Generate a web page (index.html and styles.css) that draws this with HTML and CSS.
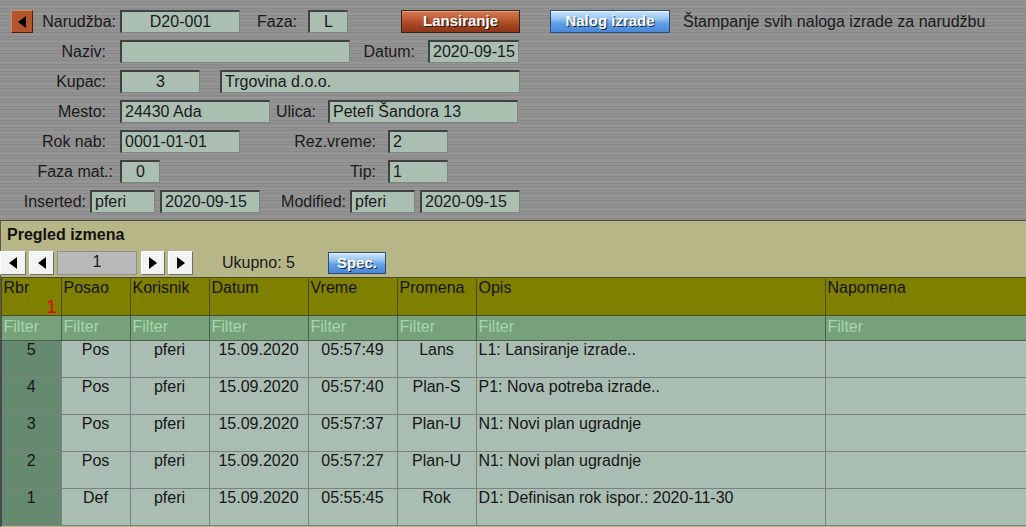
FILE: index.html
```html
<!DOCTYPE html>
<html lang="sr">
<head>
<meta charset="utf-8">
<title>Narudžba</title>
<link rel="stylesheet" href="styles.css">
</head>
<body>
<div class="top">
  <div class="row">
    <span class="back"><span class="tri-l"></span></span>
    <span class="lbl w83">Narudžba:</span>
    <span class="fld c ml4 w120">D20-001</span>
    <span class="lbl w57">Faza:</span>
    <span class="fld c ml11 w40">L</span>
    <span class="btn red ml53 w119">Lansiranje</span>
    <span class="btn blue ml30 w120">Nalog izrade</span>
    <span class="note ml13">Štampanje svih naloga izrade za narudžbu</span>
  </div>
  <div class="row">
    <span class="lbl w106">Naziv:</span>
    <span class="fld ml14 w230"></span>
    <span class="lbl w65">Datum:</span>
    <span class="fld ml13 w91">2020-09-15</span>
  </div>
  <div class="row">
    <span class="lbl w106">Kupac:</span>
    <span class="fld c ml14 w80">3</span>
    <span class="fld ml20 w300">Trgovina d.o.o.</span>
  </div>
  <div class="row">
    <span class="lbl w106">Mesto:</span>
    <span class="fld ml14 w150">24430 Ada</span>
    <span class="lbl w46">Ulica:</span>
    <span class="fld ml12 w190">Petefi Šandora 13</span>
  </div>
  <div class="row">
    <span class="lbl w106">Rok nab:</span>
    <span class="fld ml14 w120">0001-01-01</span>
    <span class="lbl w136">Rez.vreme:</span>
    <span class="fld ml12 w60">2</span>
  </div>
  <div class="row">
    <span class="lbl w113">Faza mat.:</span>
    <span class="fld c ml7 w40">0</span>
    <span class="lbl w216">Tip:</span>
    <span class="fld ml12 w60">1</span>
  </div>
  <div class="row">
    <span class="lbl w86">Inserted:</span>
    <span class="fld ml4 w65">pferi</span>
    <span class="fld ml5 w100">2020-09-15</span>
    <span class="lbl w86">Modified:</span>
    <span class="fld ml4 w65">pferi</span>
    <span class="fld ml5 w100">2020-09-15</span>
  </div>
</div>

<div class="panel">
  <div class="panel-title">Pregled izmena</div>
  <div class="pager">
    <span class="pbtn w26"><span class="tri-l"></span></span>
    <span class="pbtn ml3 w25"><span class="tri-l"></span></span>
    <span class="page ml3">1</span>
    <span class="pbtn ml4 w24"><span class="tri-r"></span></span>
    <span class="pbtn ml3 w25"><span class="tri-r"></span></span>
    <span class="total">Ukupno: 5</span>
    <span class="btn blue spec">Spec.</span>
  </div>
  <table class="grid">
    <colgroup>
      <col class="c1"><col class="c2"><col class="c3"><col class="c4"><col class="c5"><col class="c6"><col class="c7"><col class="c8">
    </colgroup>
    <thead>
      <tr class="head">
        <th>Rbr<div class="sort">1</div></th>
        <th>Posao</th>
        <th>Korisnik</th>
        <th>Datum</th>
        <th>Vreme</th>
        <th>Promena</th>
        <th>Opis</th>
        <th>Napomena</th>
      </tr>
      <tr class="filter">
        <td>Filter</td><td>Filter</td><td>Filter</td><td>Filter</td><td>Filter</td><td>Filter</td><td>Filter</td><td>Filter</td>
      </tr>
    </thead>
    <tbody>
      <tr><td class="num">5</td><td>Pos</td><td>pferi</td><td>15.09.2020</td><td>05:57:49</td><td>Lans</td><td class="l">L1: Lansiranje izrade..</td><td class="l"></td></tr>
      <tr><td class="num">4</td><td>Pos</td><td>pferi</td><td>15.09.2020</td><td>05:57:40</td><td>Plan-S</td><td class="l">P1: Nova potreba izrade..</td><td class="l"></td></tr>
      <tr><td class="num">3</td><td>Pos</td><td>pferi</td><td>15.09.2020</td><td>05:57:37</td><td>Plan-U</td><td class="l">N1: Novi plan ugradnje</td><td class="l"></td></tr>
      <tr><td class="num">2</td><td>Pos</td><td>pferi</td><td>15.09.2020</td><td>05:57:27</td><td>Plan-U</td><td class="l">N1: Novi plan ugradnje</td><td class="l"></td></tr>
      <tr><td class="num">1</td><td>Def</td><td>pferi</td><td>15.09.2020</td><td>05:55:45</td><td>Rok</td><td class="l">D1: Definisan rok ispor.: 2020-11-30</td><td class="l"></td></tr>
    </tbody>
  </table>
</div>
</body>
</html>
```

FILE: styles.css
```css
html, body {
  margin: 0;
  padding: 0;
}
body {
  width: 1026px;
  height: 527px;
  overflow: hidden;
  font-family: "Liberation Sans", Arial, sans-serif;
  font-size: 16px;
  color: #1a1a1a;
  background: #b6b687;
}

/* ---------- top form ---------- */
.top {
  height: 220px;
  box-sizing: border-box;
  padding-top: 10px;
  background-color: #8f8f90;
  background-image:
    repeating-linear-gradient(180deg,
      rgba(255,255,255,0.06) 0px, rgba(255,255,255,0.06) 1px,
      rgba(0,0,0,0.04) 1px, rgba(0,0,0,0.04) 2px,
      rgba(255,255,255,0.02) 2px, rgba(255,255,255,0.02) 4px,
      rgba(0,0,0,0.05) 4px, rgba(0,0,0,0.05) 5px,
      rgba(255,255,255,0.04) 5px, rgba(255,255,255,0.04) 7px);
}
.row {
  display: flex;
  align-items: center;
  height: 23px;
  margin-bottom: 7px;
  white-space: nowrap;
}
.lbl {
  flex: none;
  text-align: right;
  line-height: 23px;
}
.fld {
  flex: none;
  box-sizing: border-box;
  height: 23px;
  line-height: 20px;
  padding-left: 3px;
  background: #aabeb2;
  border-style: solid;
  border-width: 2px 1px 1px 2px;
  border-color: #3e4240 #7d8682 #7d8682 #3e4240;
  overflow: hidden;
}
.fld.c {
  text-align: center;
  padding-left: 0;
}
.note {
  line-height: 23px;
}

.back {
  flex: none;
  box-sizing: border-box;
  width: 22px;
  height: 23px;
  margin-left: 11px;
  background: #b3552c;
  border: 1px solid;
  border-color: #d78a66 #4a2010 #4a2010 #d78a66;
  display: flex;
  align-items: center;
  justify-content: center;
}
.tri-l {
  width: 0;
  height: 0;
  border-top: 6px solid transparent;
  border-bottom: 6px solid transparent;
  border-right: 8px solid #000;
}
.tri-r {
  width: 0;
  height: 0;
  border-top: 6px solid transparent;
  border-bottom: 6px solid transparent;
  border-left: 8px solid #000;
}

.btn {
  flex: none;
  box-sizing: border-box;
  height: 23px;
  line-height: 20px;
  text-align: center;
  color: #fff;
  font-weight: bold;
  font-size: 15px;
  text-shadow: 1px 1px 0 rgba(0,0,0,0.75);
}
.btn.red {
  background: linear-gradient(180deg, #d57a55 0%, #bd5a33 40%, #a1421f 70%, #8c3618 100%);
  border: 1px solid #3b2418;
  box-shadow: inset 0 1px 0 rgba(255,210,180,0.45);
}
.btn.blue {
  background: linear-gradient(180deg, #cfe6fb 0%, #98c6f2 35%, #5f9de6 60%, #4a88d8 100%);
  border: 1px solid #2c4a74;
  box-shadow: inset 0 1px 0 rgba(255,255,255,0.6);
}

/* widths and gaps */
.w24 { width: 24px; } .w25 { width: 25px; } .w26 { width: 26px; }
.w40 { width: 40px; } .w46 { width: 46px; } .w57 { width: 57px; }
.w60 { width: 60px; } .w65 { width: 65px; } .w80 { width: 80px; }
.w83 { width: 83px; } .w86 { width: 86px; } .w91 { width: 91px; }
.w100 { width: 100px; } .w106 { width: 106px; } .w113 { width: 113px; }
.w119 { width: 119px; } .w120 { width: 120px; } .w136 { width: 136px; }
.w150 { width: 150px; } .w190 { width: 190px; } .w216 { width: 216px; }
.w230 { width: 230px; } .w300 { width: 300px; }
.ml3 { margin-left: 3px; } .ml4 { margin-left: 4px; } .ml5 { margin-left: 5px; }
.ml7 { margin-left: 7px; } .ml11 { margin-left: 11px; } .ml12 { margin-left: 12px; }
.ml13 { margin-left: 13px; } .ml14 { margin-left: 14px; } .ml20 { margin-left: 20px; }
.ml30 { margin-left: 30px; } .ml53 { margin-left: 53px; }

/* ---------- panel ---------- */
.panel {
  height: 307px;
  box-sizing: border-box;
  border-top: 1px solid #4d4d42;
  border-left: 1px solid #5a5a4a;
  background: #b6b687;
}
.panel-title {
  height: 30px;
  box-sizing: border-box;
  padding: 4px 0 0 6px;
  line-height: 20px;
  font-weight: bold;
  color: #111;
}
.pager {
  display: flex;
  align-items: center;
  height: 24px;
  margin-left: -1px;
  white-space: nowrap;
}
.pbtn {
  flex: none;
  box-sizing: border-box;
  height: 24px;
  background: #f2f2f2;
  border: 1px solid;
  border-color: #ffffff #6e6e6e #6e6e6e #ffffff;
  display: flex;
  align-items: center;
  justify-content: center;
}
.page {
  flex: none;
  box-sizing: border-box;
  width: 80px;
  height: 24px;
  line-height: 20px;
  text-align: center;
  background: #b9b9b9;
  border: 1px solid #8f8f8f;
}
.total {
  margin-left: 29px;
  line-height: 24px;
}
.spec {
  width: 58px;
  height: 22px;
  line-height: 19px;
  margin-left: 33px;
}

/* ---------- grid ---------- */
.grid {
  border-collapse: collapse;
  table-layout: fixed;
  width: 1026px;
  margin-top: 2px;
  margin-left: -1px;
}
.c1 { width: 60px; } .c2 { width: 69px; } .c3 { width: 79px; } .c4 { width: 99px; }
.c5 { width: 89px; } .c6 { width: 79px; } .c7 { width: 349px; } .c8 { width: 202px; }

.grid th, .grid td {
  padding: 0 3px;
  vertical-align: top;
  white-space: nowrap;
  overflow: hidden;
  font-size: 16px;
  line-height: 18px;
}
.head th {
  height: 35px;
  background: #808000;
  border: 1px solid #4b4b26;
  font-weight: normal;
  text-align: left;
  color: #141414;
  padding-top: 1px;
  padding-left: 2px;
  box-sizing: border-box;
}
.sort {
  text-align: right;
  color: #e80000;
  font-size: 18px;
  line-height: 16px;
  padding-top: 2px;
  padding-right: 1px;
}
.filter td {
  height: 25px;
  box-sizing: border-box;
  background: #77a17b;
  color: #a4d9a8;
  border: 1px solid #4c5e4c;
  padding-left: 2px;
  padding-top: 2px;
}
tbody td {
  height: 37px;
  box-sizing: border-box;
  background: #aabdb2;
  border: 1px solid #7b837e;
  text-align: center;
  color: #161616;
  padding-top: 1px;
}
tbody td.num {
  background: #658a70;
  border-left: 2px solid #4a4a4a;
}
tbody td.l {
  text-align: left;
  padding-left: 2px;
}
```
